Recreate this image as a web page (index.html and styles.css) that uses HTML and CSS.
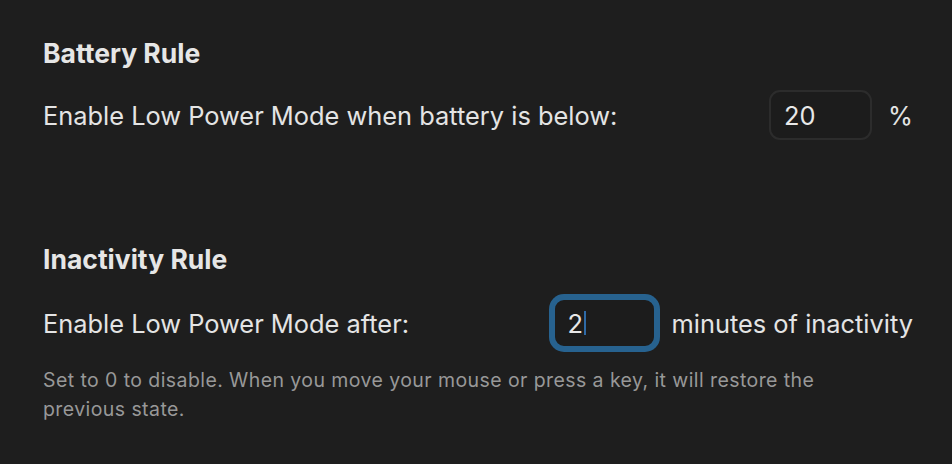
FILE: index.html
```html
<!DOCTYPE html>
<html>
<head>
<meta charset="utf-8">
<link rel="stylesheet" href="styles.css">
</head>
<body>
<main class="panel">
  <section class="rule rule-battery">
    <h2 class="rule-title">Battery Rule</h2>
    <div class="row">
      <span class="label">Enable Low Power Mode when battery is below:</span>
      <div class="control">
        <div class="field"><span class="value">20</span></div>
        <span class="unit">%</span>
      </div>
    </div>
  </section>
  <section class="rule rule-inactivity">
    <h2 class="rule-title">Inactivity Rule</h2>
    <div class="row">
      <span class="label">Enable Low Power Mode after:</span>
      <div class="control">
        <div class="field focused"><span class="value">2</span><span class="caret"></span></div>
        <span class="unit">minutes of inactivity</span>
      </div>
    </div>
    <p class="hint">Set to 0 to disable. When you move your mouse or press a key, it will restore the previous state.</p>
  </section>
</main>
</body>
</html>
```
FILE: styles.css
```css
html, body {
  margin: 0;
  padding: 0;
  background: #1e1e1e;
}
body {
  width: 952px;
  height: 464px;
  overflow: hidden;
  font-family: Inter, "Noto Sans", sans-serif;
  color: #e4e4e4;
}
.panel {
  padding: 36px 39px 0 43px;
}
.rule-title {
  margin: 0;
  font-size: 26.5px;
  font-weight: 700;
  line-height: 34px;
  color: #e6e6e6;
}
.rule-battery .row {
  margin-top: 20px;
}
.rule-inactivity {
  margin-top: 102px;
}
.rule-inactivity .row {
  margin-top: 22px;
}
.row {
  display: flex;
  align-items: center;
  justify-content: space-between;
}
.label {
  font-size: 25.4px;
  color: #e4e4e4;
}
.control {
  display: flex;
  align-items: center;
  gap: 16px;
}
.field {
  box-sizing: border-box;
  width: 103px;
  height: 50px;
  border: 2px solid #2c2c2c;
  border-radius: 11px;
  background: #1c1c1c;
  display: flex;
  align-items: center;
  padding-left: 13px;
  font-size: 25.4px;
  color: #e8e8e8;
}
.field.focused {
  border: 2px solid #27628f;
  box-shadow: 0 0 0 4px #27628f;
}
.caret {
  display: inline-block;
  width: 2px;
  height: 24px;
  margin-left: 1px;
  background: #2f6aa6;
}
.unit {
  font-size: 25.4px;
  color: #e4e4e4;
}
.hint {
  margin: 18px 0 0;
  max-width: 820px;
  font-size: 19.5px;
  letter-spacing: 0.42px;
  line-height: 29px;
  color: #989898;
}
```
